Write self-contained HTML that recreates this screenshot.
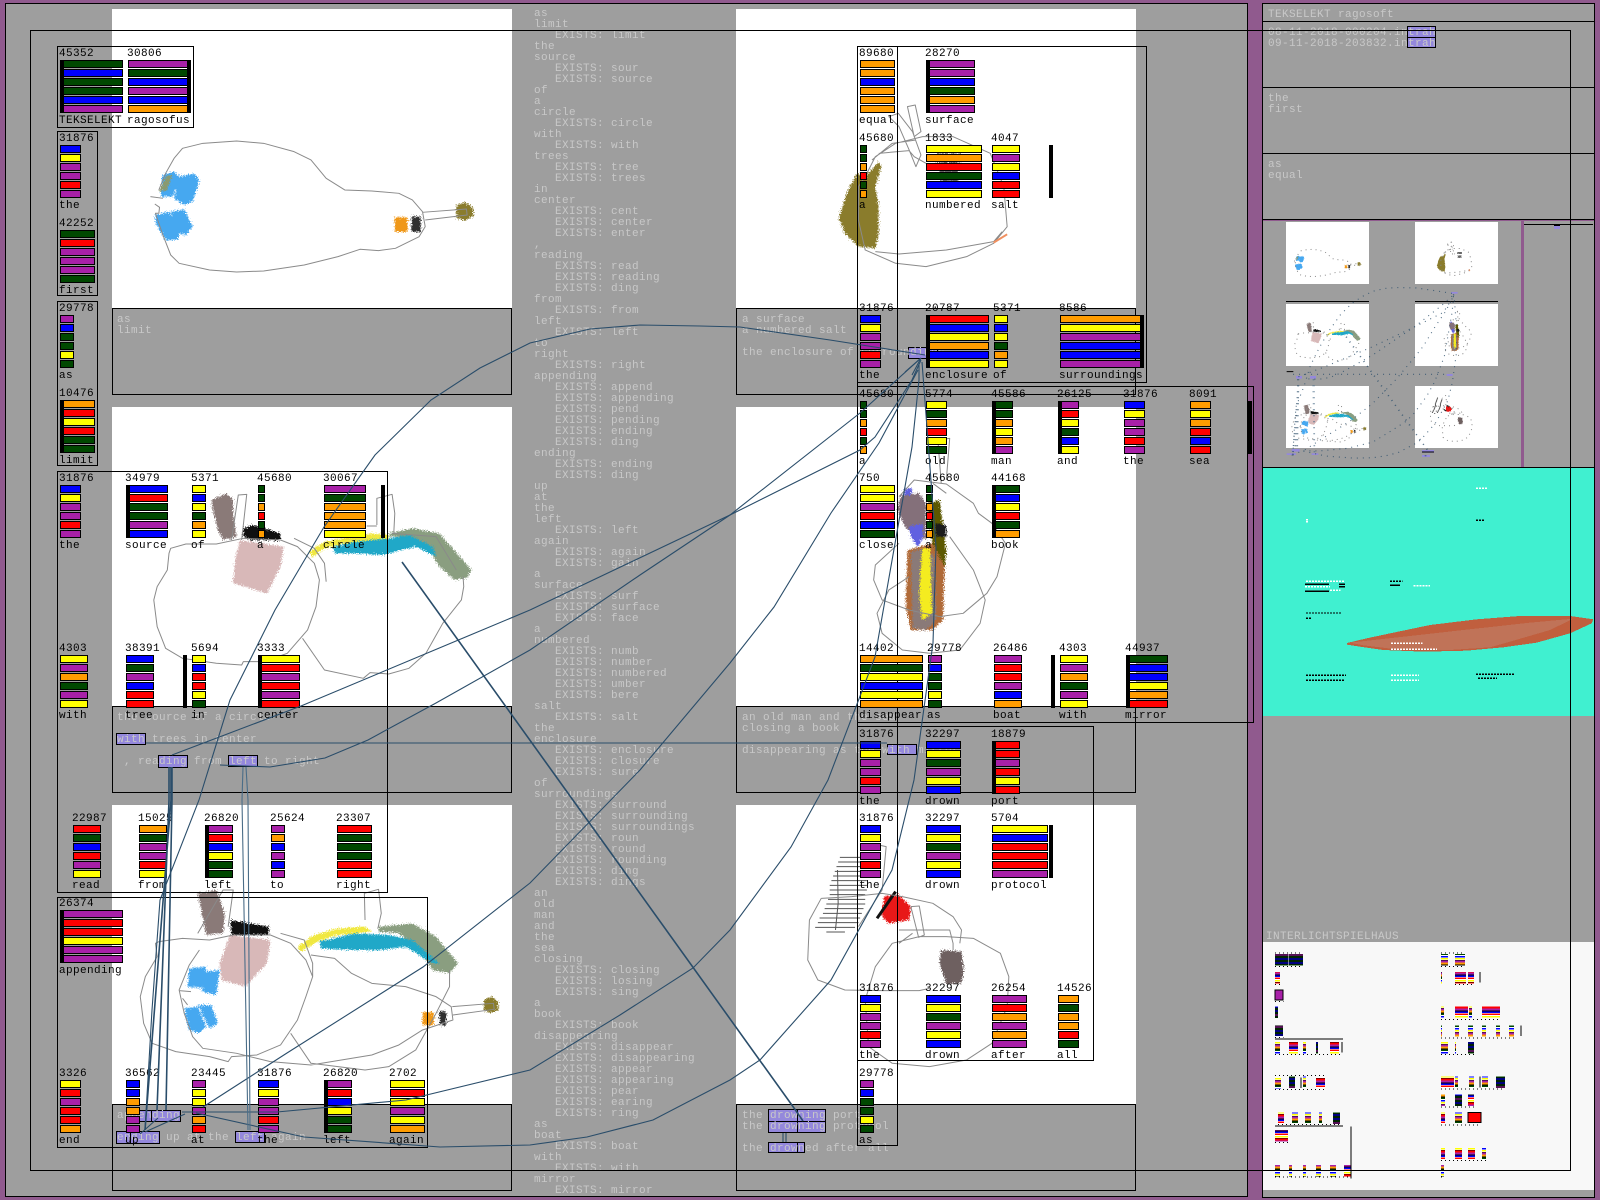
<!DOCTYPE html>
<html><head><meta charset="utf-8"><title>TEKSELEKT</title>
<style>
html,body{margin:0;padding:0;width:1600px;height:1200px;overflow:hidden;background:#905a8e}
body{position:relative;font:11px/11px "Liberation Mono",monospace;letter-spacing:.4px}
div,pre,svg{position:absolute;margin:0}
pre{color:#c8c8c8;font:inherit;white-space:pre;transform:translateY(2px)}
.f{border:1px solid #000;box-sizing:border-box}
.g0{background:#9e9e9e}
.t{background:#9e9e9e;border:1px solid #000;box-sizing:border-box;width:400px;height:87px}
.h{background:#9488dc;border:1px solid #000;box-sizing:border-box}
.w{color:#000}
.w b{position:absolute;left:-1px;top:-11px;font-weight:400;white-space:pre}
.w s{position:absolute;left:-1px;top:56px;text-decoration:none;white-space:pre}
.w i{display:block;box-sizing:border-box;height:8px;margin-bottom:1px;border:1px solid #000}
.bl i{margin-left:3px}.br i{margin-right:3px}
.bl::before,.br::before{content:"";position:absolute;top:0;width:4px;height:53px;background:#000}
.bl::before{left:0}.br::before{right:0}
.k{width:4px;height:53px;background:#000}
.g{background:#004800}.b{background:#00f}.y{background:#ff0}.p{background:#a820a8}.r{background:#f00}.o{background:#ff9c00}
.s{fill:none;stroke:#8a8a8a;stroke-width:1;vector-effect:non-scaling-stroke;stroke-linejoin:round}
.c{fill:none;stroke:#2a4d6a;stroke-width:1.1;vector-effect:non-scaling-stroke}
.d{fill:none;stroke:#2a4d6a;stroke-width:1.6;vector-effect:non-scaling-stroke}
</style></head><body>

<div class="f g0" style="left:5px;top:3px;width:1243px;height:1194px"></div>
<div class="f g0" style="left:1262px;top:3px;width:333px;height:1195px"></div>
<div class="f" style="left:1262px;top:21px;width:333px;height:67px"></div>
<div class="f" style="left:1262px;top:87px;width:333px;height:67px"></div>
<div class="f" style="left:1262px;top:153px;width:333px;height:67px"></div>
<div style="left:1263px;top:220px;width:331px;height:1px;background:#905a8e"></div>
<div style="left:1521px;top:220px;width:3px;height:247px;background:#905a8e"></div>
<div style="left:1524px;top:224px;width:69px;height:1px;background:#000"></div>
<div style="left:1554px;top:225px;width:6px;height:4px;background:#9488dc;border-top:1px solid #000;box-sizing:border-box"></div>

<svg style="left:0;top:0" width="1600" height="1200" viewBox="0 0 1600 1200">
<defs>
<filter id="fz" x="-15%" y="-15%" width="130%" height="130%" color-interpolation-filters="sRGB"><feTurbulence type="fractalNoise" baseFrequency=".3" numOctaves="2" seed="4"/><feDisplacementMap in="SourceGraphic" scale="22" xChannelSelector="R" yChannelSelector="G"/></filter>
</defs>
<g fill="#fff">
<rect x="112" y="9" width="400" height="300"/><rect x="736" y="9" width="400" height="300"/>
<rect x="112" y="407" width="400" height="300"/><rect x="736" y="407" width="400" height="300"/>
<rect x="112" y="805" width="400" height="300"/><rect x="736" y="805" width="400" height="300"/>
<rect x="1286" y="222" width="83" height="62"/><rect x="1415" y="222" width="83" height="62"/>
<rect x="1286" y="304" width="83" height="62"/><rect x="1415" y="304" width="83" height="62"/>
<rect x="1286" y="386" width="83" height="62"/><rect x="1415" y="386" width="83" height="62"/>
</g>
<rect x="1286" y="301" width="83" height="1" fill="#000"/><rect x="1415" y="301" width="83" height="1" fill="#000"/>

<g id="i1" transform="scale(.338 .3333)">
<g filter="url(#fz)">
<path fill="#46a8f0" d="M480 525L515 515 535 535 510 590 475 590ZM530 530L575 520 590 540 570 605 545 615 515 595ZM460 645L500 635 535 690 525 720 490 720 460 670ZM505 635L545 628 570 680 550 705 525 700Z"/>
<path fill="#8a9a70" d="M470 575L490 530 510 525 495 570Z"/>
<path fill="#f09818" d="M1168 652H1206V696H1168Z"/><path fill="#303030" d="M1218 650H1245V696H1218Z"/>
<path fill="#8a7c2c" d="M1350 618L1375 606 1398 622 1402 648 1375 662 1350 654Z"/>
</g>
<path class="s" d="M458 612L472 622 470 640 460 640 480 700 505 765 530 790 620 810 700 816 780 813 900 795 1000 770 1065 748 1120 752 1170 745 1240 710 1258 680 1250 635 1220 600 1180 580 1100 573 1020 570 965 535 920 480 870 455 780 430 700 423 600 430 540 445 515 475 490 520 470 570M445 590L482 595M1250 637L1380 627 1382 645 1258 660"/>
</g>

<g id="i2" transform="translate(730 0) scale(.338 .3333)">
<g filter="url(#fz)"><path fill="#8a7c2c" d="M400 530L440 485 448 500 430 560 440 620 440 700 430 745 380 740 340 700 322 655 345 580 375 520Z"/>
<path fill="#666" d="M612 460H680V490H612ZM620 510H675V545H620Z"/></g>
<path class="s" d="M400 530L430 470 490 430 570 410 660 410 770 460 810 560 820 680 780 730 700 770 580 800 490 790 400 750 380 660 380 560ZM440 460L530 452 545 470 580 490M420 480L480 430 550 420M430 755L500 762 640 750 780 725 805 695M470 350L498 340 540 395 565 465 550 500 530 450 500 380ZM525 320L548 315 565 395 545 410Z"/>
<path d="M780 728L820 703" fill="none" stroke="#f09060" stroke-width="2" vector-effect="non-scaling-stroke"/>
</g>

<g id="i3" transform="translate(0 400) scale(.338 .3333)">
<g filter="url(#fz)">
<path fill="#8a7a78" d="M625 300L670 280 690 300 690 340 700 410 660 420 645 390 630 330Z"/>
<path fill="#d8b8b8" d="M710 420L840 440 830 500 790 580 690 550 695 480Z"/>
<path fill="#101010" d="M720 385L750 375 830 400 830 420 740 420 720 410Z"/>
<path fill="#8a9e80" d="M1150 400L1220 385 1300 400 1395 510 1380 535 1345 540 1300 500 1270 450 1210 410 1155 410Z"/>
<path fill="#f0e840" d="M915 455L960 425 1010 415 1100 400 1150 405 1150 420 1010 432 960 445 925 472Z"/>
<path fill="#20a8c8" d="M985 440L1050 425 1150 415 1210 405 1280 440 1290 470 1230 440 1130 465 1050 460 990 460Z"/>
</g>
<path class="s" d="M505 445L550 432 640 432 720 415 830 420 880 440 930 490 945 540 935 620 910 690 850 760 780 785 720 785 715 795 640 790 540 775 490 745 465 680 455 600 465 560 495 510 500 460ZM895 715L960 810 1075 835 1095 818 1150 822 1210 805 1260 760 1310 670 1365 600 1372 560 1370 530M870 415L930 445 960 490 965 545M685 420L705 285 730 283 715 420M1115 375L1115 295 1160 283 1168 340 1165 400M1085 378H1115M1160 400L1290 410 1350 510"/>
</g>

<g id="i4" transform="translate(730 380) scale(.338 .3333)">
<g filter="url(#fz)">
<path fill="#84707a" d="M505 345L560 340 580 370 580 480 520 445 495 390Z"/>
<path fill="#5c5800" d="M585 370L620 360 640 510 635 570 600 500Z"/>
<path fill="#6060e0" d="M515 325H540L535 345H515ZM530 440L570 430 572 470 555 500 535 470Z"/>
<path fill="#1c1c1c" d="M605 430L640 435 640 470 610 470Z"/>
<path fill="#b06a38" d="M525 510L600 490 635 560 630 720 600 750 535 750 520 680Z"/>
<path fill="#8a7a78" d="M535 515L570 505 605 530 610 720 580 750 540 745Z"/>
<path fill="#f4ec20" d="M568 505L592 505 598 700 568 722 560 640Z"/>
</g>
<path class="s" d="M500 350L545 300 640 312 720 370 735 400 775 430 815 490 790 590 760 640 690 700 620 710 530 690 450 660 425 600 430 555 500 490M650 470L720 570 755 660 740 730 680 810 590 820 510 810 450 760 435 700 470 630 530 590M610 180L650 175 640 300M615 180L625 310M600 310L640 340"/>
</g>

<g id="i5" transform="translate(0 800) scale(.338 .3333)">
<g filter="url(#fz)">
<path fill="#8a7a78" d="M585 280L640 270 665 340 660 400 610 405Z"/>
<path fill="#d8b8b8" d="M680 405L800 420 790 490 725 560 655 540 650 490Z"/>
<path fill="#101010" d="M682 360L795 380 795 405 685 405Z"/>
<path fill="#46a8f0" d="M560 505L610 500 600 565 555 560ZM605 515L650 510 640 585 600 575ZM545 625L585 620 610 680 590 700 560 690ZM585 615L625 615 645 670 620 685Z"/>
<path fill="#8a9e80" d="M1120 380L1220 370 1290 410 1355 490 1330 520 1280 510 1240 450 1180 400 1120 395Z"/>
<path fill="#f0e840" d="M880 440L930 405 1000 385 1080 380 1100 395 1000 405 940 425 890 455Z"/>
<path fill="#20a8c8" d="M945 425L1050 400 1150 405 1220 420 1300 490 1280 490 1200 440 1130 450 1040 450 950 445Z"/>
<path fill="#f09818" d="M1250 637H1284V676H1250Z"/><path fill="#303030" d="M1300 634H1320V676H1300Z"/>
<path fill="#8a7c2c" d="M1432 600L1455 590 1474 605 1474 630 1450 640 1432 630Z"/>
</g>
<path class="s" d="M470 425L540 415 620 420 690 405 800 405 860 430 905 480 925 530 905 590 880 660 830 735 760 765 685 770 675 785 620 770 520 755 450 730 425 670 415 590 430 530 465 470 460 430ZM590 450L560 495 530 570 545 640 570 710 600 745 700 760 800 785 920 795 1100 765 1180 735 1250 690 1340 660 1335 620 1290 590 1200 560 1100 550 1040 520 990 475 920 465M860 700L920 790 1080 810 1150 800 1230 750 1290 640 1330 560 1330 510M585 400L660 270 690 270 675 380M1080 360L1078 280 1120 268 1128 340 1118 385M1338 620L1460 610 1462 628 1340 645M830 400L900 420 925 490 925 530M530 572L565 575M540 595L555 615"/>
</g>

<g id="i6" transform="translate(730 780) scale(.338 .3333)">
<path class="s" stroke-width="1" style="stroke:#555" d="M325 232H400M320 246H400M315 260H405M310 274H405M305 288H405M300 302H405M295 316H405M295 330H405M295 344H400M290 358H400M285 372H400M280 386H395M275 400H390M265 414H385M260 428H380M252 442H370M285 456H340M318 270L320 370 312 450"/>
<g filter="url(#fz)"><path fill="#e81818" d="M455 350L500 345 535 380 530 420 470 430 450 410Z"/>
<path fill="#6e6060" d="M625 510L685 515 692 570 685 610 640 612 620 550Z"/></g>
<path d="M435 415L490 335" fill="none" stroke="#111" stroke-width="3" vector-effect="non-scaling-stroke"/>
<path class="s" d="M270 355L360 350 450 340 510 350 600 370 660 410 685 450 680 490M270 355L235 420 230 540 260 600 340 630 450 632 560 632 590 625M480 490L560 470 640 470 720 475 800 520 825 590 820 680 775 790 700 840 590 860 480 850 410 800 400 660 430 560 480 490M535 380L560 378 575 465 558 472ZM500 450H650L660 490V510M540 460L500 490M440 195L462 200 450 330 380 440"/>
</g>

<g stroke-dasharray="1 4">
<use href="#i1" transform="translate(1286 222) scale(.2075) translate(-112 -9)"/>
<use href="#i2" transform="translate(1286 222) scale(.2075) translate(-112 -9)"/>
<use href="#i3" transform="translate(1286 222) scale(.2075) translate(-112 -9)"/>
<use href="#i4" transform="translate(1286 222) scale(.2075) translate(-112 -9)"/>
<use href="#i5" transform="translate(1286 222) scale(.2075) translate(-112 -9)"/>
<use href="#i6" transform="translate(1286 222) scale(.2075) translate(-112 -9)"/>
</g>
</svg>

<pre style="left:534px;top:7px;height:1186px;overflow:hidden;width:190px">as
limit
   EXISTS: limit
the
source
   EXISTS: sour
   EXISTS: source
of
a
circle
   EXISTS: circle
with
   EXISTS: with
trees
   EXISTS: tree
   EXISTS: trees
in
center
   EXISTS: cent
   EXISTS: center
   EXISTS: enter
,
reading
   EXISTS: read
   EXISTS: reading
   EXISTS: ding
from
   EXISTS: from
left
   EXISTS: left
to
right
   EXISTS: right
appending
   EXISTS: append
   EXISTS: appending
   EXISTS: pend
   EXISTS: pending
   EXISTS: ending
   EXISTS: ding
ending
   EXISTS: ending
   EXISTS: ding
up
at
the
left
   EXISTS: left
again
   EXISTS: again
   EXISTS: gain
a
surface
   EXISTS: surf
   EXISTS: surface
   EXISTS: face
a
numbered
   EXISTS: numb
   EXISTS: number
   EXISTS: numbered
   EXISTS: umber
   EXISTS: bere
salt
   EXISTS: salt
the
enclosure
   EXISTS: enclosure
   EXISTS: closure
   EXISTS: sure
of
surroundings
   EXISTS: surround
   EXISTS: surrounding
   EXISTS: surroundings
   EXISTS: roun
   EXISTS: round
   EXISTS: rounding
   EXISTS: ding
   EXISTS: dings
an
old
man
and
the
sea
closing
   EXISTS: closing
   EXISTS: losing
   EXISTS: sing
a
book
   EXISTS: book
disappearing
   EXISTS: disappear
   EXISTS: disappearing
   EXISTS: appear
   EXISTS: appearing
   EXISTS: pear
   EXISTS: earing
   EXISTS: ring
as
boat
   EXISTS: boat
with
   EXISTS: with
mirror
   EXISTS: mirror
the</pre>

<div class="t" style="left:112px;top:308px"></div><div class="t" style="left:736px;top:308px"></div>
<div class="t" style="left:112px;top:706px"></div><div class="t" style="left:736px;top:706px"></div>
<div class="t" style="left:112px;top:1104px"></div><div class="t" style="left:736px;top:1104px"></div>

<div class="h" style="left:116px;top:733px;width:30px;height:12px"></div>
<div class="h" style="left:158px;top:755px;width:30px;height:13px"></div>
<div class="h" style="left:228px;top:755px;width:30px;height:12px"></div>
<div class="h" style="left:908px;top:347px;width:30px;height:12px"></div>
<div class="h" style="left:887px;top:744px;width:30px;height:11px"></div>
<div class="h" style="left:139px;top:1110px;width:19px;height:12px"></div>
<div class="h" style="left:151px;top:1110px;width:30px;height:12px"></div>
<div class="h" style="left:116px;top:1131px;width:44px;height:13px"></div>
<div class="h" style="left:116px;top:1131px;width:15px;height:13px"></div>
<div class="h" style="left:235px;top:1131px;width:30px;height:12px"></div>
<div class="h" style="left:768px;top:1109px;width:58px;height:13px"></div>
<div class="h" style="left:768px;top:1109px;width:30px;height:13px"></div>
<div class="h" style="left:768px;top:1121px;width:58px;height:12px"></div>
<div class="h" style="left:768px;top:1121px;width:30px;height:12px"></div>
<div class="h" style="left:768px;top:1142px;width:37px;height:11px"></div>
<div class="h" style="left:768px;top:1142px;width:30px;height:11px"></div>
<div class="h" style="left:1407px;top:26px;width:29px;height:12px"></div>
<div class="h" style="left:1407px;top:37px;width:29px;height:11px"></div>

<pre style="left:117px;top:313px">as
limit</pre>
<pre style="left:742px;top:313px">a surface
a numbered salt

the enclosure of surroundings</pre>
<pre style="left:117px;top:711px">the source of a circle

with trees in center

 , reading from left to right</pre>
<pre style="left:742px;top:711px">an old man and the sea
closing a book

disappearing as the with mirror</pre>
<pre style="left:117px;top:1109px">appending

ending up at the left again</pre>
<pre style="left:742px;top:1109px">the drowning port
the drowning protocol

the drowned after all</pre>
<pre style="left:1268px;top:8px;letter-spacing:.4px">TEKSELEKT ragosoft</pre>
<pre style="left:1268px;top:26px">08-11-2018-000204.intrah
09-11-2018-203832.intrah</pre>
<pre style="left:1268px;top:92px">the
first</pre>
<pre style="left:1268px;top:158px">as
equal</pre>
<pre style="left:1266px;top:930px">INTERLICHTSPIELHAUS</pre>

<div style="left:1263px;top:467px;width:331px;height:249px;background:#40f0d0;border-top:1px solid #000;box-sizing:border-box"></div>
<div style="left:1263px;top:942px;width:331px;height:248px;background:#f8f8f8"></div>

<svg style="left:1250px;top:460px" width="350" height="270" viewBox="0 0 1050 810" shape-rendering="crispEdges">
<path fill="#c05f3e" d="M291 549L350 535 430 518 540 495 680 478 810 468 960 468 1030 478 1025 490 960 520 860 548 760 562 650 572 520 575 400 570 330 560 291 554Z"/>
<path fill="#c07358" d="M300 548L480 528 640 510 840 488 970 476 900 510 780 545 720 562 600 570 440 568 340 556Z"/>
<g fill="none" stroke-width="4" stroke-dasharray="6 3">
<path stroke="#fff" d="M678 85H712M168 179H174M168 185H174M168 364H282M165 380H240M490 377H540M423 550H517M423 568H561M423 646H507M423 661H507M240 391H272"/>
<path stroke="#000" stroke-dasharray="none" d="M165 373H237M165 394H237M267 373H285M267 380H285M420 376H450"/>
<path stroke="#000" d="M678 181H702M420 364H458M168 459H273M168 475H186M168 646H288M168 661H282M678 643H795M684 655H741"/>
</g>
</svg>

<svg style="left:1250px;top:920px" width="350" height="280" viewBox="0 0 1050 840" shape-rendering="crispEdges">
<defs>
<pattern id="p1" width="6" height="36" patternUnits="userSpaceOnUse"><rect width="6" height="36" fill="#000"/><rect y="1" width="6" height="4" fill="#004800"/><rect y="7" width="6" height="4" fill="#00f"/><rect y="13" width="6" height="4" fill="#004800"/><rect y="19" width="6" height="4" fill="#00f"/><rect y="25" width="6" height="4" fill="#004800"/><rect y="31" width="6" height="4" fill="#a820a8"/></pattern>
<pattern id="p2" width="6" height="36" patternUnits="userSpaceOnUse"><rect width="6" height="36" fill="#fff"/><rect y="0" width="6" height="5" fill="#ff0"/><rect y="6" width="6" height="2" fill="#000"/><rect y="8" width="6" height="5" fill="#f00"/><rect y="14" width="6" height="5" fill="#a820a8"/><rect y="20" width="6" height="2" fill="#000"/><rect y="22" width="6" height="5" fill="#00f"/><rect y="28" width="6" height="5" fill="#f00"/></pattern>
<pattern id="p3" width="6" height="36" patternUnits="userSpaceOnUse"><rect width="6" height="36" fill="#fff"/><rect y="0" width="6" height="5" fill="#00f"/><rect y="6" width="6" height="5" fill="#ff0"/><rect y="12" width="6" height="2" fill="#000"/><rect y="14" width="6" height="5" fill="#a820a8"/><rect y="20" width="6" height="5" fill="#ff9c00"/><rect y="26" width="6" height="2" fill="#000"/><rect y="28" width="6" height="5" fill="#004800"/></pattern>
</defs>
<g fill="url(#p1)">
<rect x="75" y="102" width="40" height="34"/><rect x="117" y="102" width="42" height="34"/><rect x="75" y="260" width="9" height="34"/><rect x="198" y="366" width="6" height="34"/><rect x="654" y="366" width="18" height="34"/><rect x="75" y="316" width="24" height="32"/><rect x="117" y="470" width="18" height="34"/><rect x="249" y="578" width="21" height="34"/><rect x="615" y="524" width="21" height="34"/><rect x="738" y="470" width="27" height="34"/>
</g>
<g fill="url(#p2)">
<rect x="75" y="156" width="15" height="34"/><rect x="615" y="156" width="33" height="34"/><rect x="654" y="156" width="18" height="34"/><rect x="615" y="260" width="39" height="34"/><rect x="696" y="260" width="54" height="34"/><rect x="117" y="366" width="27" height="34"/><rect x="240" y="366" width="27" height="34"/><rect x="198" y="472" width="27" height="32"/><rect x="84" y="578" width="18" height="34"/><rect x="75" y="630" width="39" height="34"/><rect x="282" y="735" width="21" height="34"/><rect x="654" y="684" width="21" height="34"/><rect x="573" y="470" width="39" height="34"/><rect x="615" y="684" width="21" height="34"/><rect x="573" y="578" width="12" height="34"/><rect x="654" y="524" width="18" height="34"/><rect x="573" y="684" width="12" height="34"/>
</g>
<g fill="url(#p3)">
<rect x="573" y="102" width="21" height="34"/><rect x="615" y="102" width="30" height="34"/><rect x="573" y="156" width="3" height="34"/><rect x="573" y="260" width="9" height="34"/><rect x="657" y="260" width="9" height="34"/><rect x="573" y="316" width="3" height="34"/><rect x="615" y="316" width="12" height="34"/><rect x="654" y="316" width="15" height="34"/><rect x="696" y="316" width="12" height="34"/><rect x="738" y="316" width="12" height="34"/><rect x="777" y="316" width="15" height="34"/><rect x="573" y="366" width="21" height="34"/><rect x="615" y="366" width="3" height="34"/><rect x="75" y="366" width="15" height="34"/><rect x="159" y="366" width="9" height="34"/><rect x="75" y="472" width="18" height="34"/><rect x="159" y="470" width="9" height="34"/><rect x="126" y="578" width="18" height="34"/><rect x="165" y="578" width="18" height="34"/><rect x="207" y="578" width="9" height="34"/><rect x="75" y="735" width="15" height="34"/><rect x="117" y="735" width="9" height="34"/><rect x="159" y="735" width="9" height="34"/><rect x="198" y="735" width="15" height="34"/><rect x="240" y="735" width="18" height="34"/><rect x="615" y="470" width="9" height="34"/><rect x="657" y="470" width="15" height="34"/><rect x="696" y="470" width="18" height="34"/><rect x="573" y="524" width="12" height="34"/><rect x="615" y="578" width="21" height="34"/><rect x="696" y="684" width="12" height="34"/><rect x="573" y="735" width="9" height="34"/>
</g>
<rect x="75" y="210" width="24" height="30" fill="#a820a8" stroke="#000" stroke-width="3"/>
<rect x="654" y="578" width="39" height="30" fill="#f00" stroke="#000" stroke-width="3"/>
<path stroke="#000" stroke-width="3" fill="none" d="M75 357H279M276 366V398M153 472V504M690 156V188M813 316V348M690 470V502M75 618H279M303 620V775"/>
<path stroke="#000" stroke-width="3" stroke-dasharray="3 9" fill="none" d="M75 99H159M75 139H159M75 193H90M75 244H100M75 352H100M75 403H270M75 508H225M75 466H225M84 614H270M75 668H114M75 771H300M573 99H645M573 139H645M615 193H672M573 298H750M573 354H792M573 403H672M573 507H765M573 561H672M573 615H692M573 722H708M573 771H582"/>
</svg>

<div class="f" style="left:57px;top:46px;width:137px;height:82px"></div>
<div class="f" style="left:57px;top:131px;width:41px;height:165px"></div>
<div class="f" style="left:57px;top:301px;width:41px;height:165px"></div>
<div class="f" style="left:57px;top:471px;width:331px;height:422px"></div>
<div class="f" style="left:57px;top:897px;width:371px;height:251px"></div>
<div class="f" style="left:857px;top:46px;width:290px;height:337px"></div>
<div class="f" style="left:857px;top:386px;width:397px;height:337px"></div>
<div class="f" style="left:857px;top:726px;width:237px;height:335px"></div>
<div class="f" style="left:857px;top:46px;width:41px;height:1100px"></div>
<div class="f" style="left:30px;top:30px;width:1541px;height:1141px"></div>

<div class="w bl" style="left:60px;top:60px;width:63px"><b>45352</b><i class="g"></i><i class="b"></i><i class="g"></i><i class="g"></i><i class="b"></i><i class="p"></i><s>TEKSELEKT</s></div>
<div class="w br" style="left:128px;top:60px;width:63px"><b>30806</b><i class="p"></i><i class="g"></i><i class="b"></i><i class="p"></i><i class="b"></i><i class="o"></i><s>ragosofus</s></div>
<div class="w" style="left:60px;top:145px;width:21px"><b>31876</b><i class="b"></i><i class="y"></i><i class="p"></i><i class="p"></i><i class="r"></i><i class="p"></i><s>the</s></div>
<div class="w" style="left:60px;top:230px;width:35px"><b>42252</b><i class="g"></i><i class="r"></i><i class="p"></i><i class="p"></i><i class="p"></i><i class="g"></i><s>first</s></div>
<div class="w" style="left:60px;top:315px;width:14px"><b>29778</b><i class="p"></i><i class="b"></i><i class="g"></i><i class="g"></i><i class="y"></i><i class="g"></i><s>as</s></div>
<div class="w bl" style="left:60px;top:400px;width:35px"><b>10476</b><i class="o"></i><i class="r"></i><i class="y"></i><i class="r"></i><i class="g"></i><i class="g"></i><s>limit</s></div>

<div class="w" style="left:60px;top:485px;width:21px"><b>31876</b><i class="b"></i><i class="y"></i><i class="p"></i><i class="p"></i><i class="r"></i><i class="p"></i><s>the</s></div>
<div class="w bl" style="left:126px;top:485px;width:42px"><b>34979</b><i class="b"></i><i class="r"></i><i class="g"></i><i class="g"></i><i class="p"></i><i class="b"></i><s>source</s></div>
<div class="w" style="left:192px;top:485px;width:14px"><b>5371</b><i class="y"></i><i class="b"></i><i class="y"></i><i class="g"></i><i class="o"></i><i class="y"></i><s>of</s></div>
<div class="w" style="left:258px;top:485px;width:7px"><b>45680</b><i class="g"></i><i class="g"></i><i class="o"></i><i class="r"></i><i class="g"></i><i class="o"></i><s>a</s></div>
<div class="w" style="left:324px;top:485px;width:42px"><b>30067</b><i class="p"></i><i class="g"></i><i class="o"></i><i class="o"></i><i class="o"></i><i class="y"></i><s>circle</s></div>
<div class="k" style="left:381px;top:485px"></div>
<div class="w" style="left:60px;top:655px;width:28px"><b>4303</b><i class="y"></i><i class="p"></i><i class="o"></i><i class="g"></i><i class="p"></i><i class="y"></i><s>with</s></div>
<div class="w" style="left:126px;top:655px;width:28px"><b>38391</b><i class="b"></i><i class="g"></i><i class="p"></i><i class="b"></i><i class="r"></i><i class="r"></i><s>tree</s></div>
<div class="k" style="left:183px;top:655px"></div>
<div class="w" style="left:192px;top:655px;width:14px"><b>5694</b><i class="y"></i><i class="b"></i><i class="r"></i><i class="r"></i><i class="y"></i><i class="g"></i><s>in</s></div>
<div class="w bl" style="left:258px;top:655px;width:42px"><b>3333</b><i class="y"></i><i class="r"></i><i class="p"></i><i class="r"></i><i class="p"></i><i class="r"></i><s>center</s></div>
<div class="w" style="left:73px;top:825px;width:28px"><b>22987</b><i class="r"></i><i class="g"></i><i class="b"></i><i class="r"></i><i class="p"></i><i class="y"></i><s>read</s></div>
<div class="w" style="left:139px;top:825px;width:28px"><b>15025</b><i class="o"></i><i class="g"></i><i class="p"></i><i class="p"></i><i class="r"></i><i class="y"></i><s>from</s></div>
<div class="w bl" style="left:205px;top:825px;width:28px"><b>26820</b><i class="p"></i><i class="r"></i><i class="b"></i><i class="y"></i><i class="g"></i><i class="g"></i><s>left</s></div>
<div class="w" style="left:271px;top:825px;width:14px"><b>25624</b><i class="p"></i><i class="o"></i><i class="b"></i><i class="p"></i><i class="b"></i><i class="p"></i><s>to</s></div>
<div class="w" style="left:337px;top:825px;width:35px"><b>23307</b><i class="r"></i><i class="g"></i><i class="g"></i><i class="g"></i><i class="r"></i><i class="r"></i><s>right</s></div>

<div class="w bl" style="left:60px;top:910px;width:63px"><b>26374</b><i class="p"></i><i class="r"></i><i class="r"></i><i class="y"></i><i class="p"></i><i class="p"></i><s>appending</s></div>
<div class="w" style="left:60px;top:1080px;width:21px"><b>3326</b><i class="y"></i><i class="r"></i><i class="p"></i><i class="r"></i><i class="r"></i><i class="o"></i><s>end</s></div>
<div class="w" style="left:126px;top:1080px;width:14px"><b>36562</b><i class="b"></i><i class="b"></i><i class="o"></i><i class="o"></i><i class="p"></i><i class="p"></i><s>up</s></div>
<div class="w" style="left:192px;top:1080px;width:14px"><b>23445</b><i class="p"></i><i class="y"></i><i class="y"></i><i class="p"></i><i class="o"></i><i class="r"></i><s>at</s></div>
<div class="w" style="left:258px;top:1080px;width:21px"><b>31876</b><i class="b"></i><i class="y"></i><i class="p"></i><i class="p"></i><i class="r"></i><i class="p"></i><s>the</s></div>
<div class="w bl" style="left:324px;top:1080px;width:28px"><b>26820</b><i class="p"></i><i class="r"></i><i class="b"></i><i class="y"></i><i class="g"></i><i class="g"></i><s>left</s></div>
<div class="w" style="left:390px;top:1080px;width:35px"><b>2702</b><i class="y"></i><i class="r"></i><i class="y"></i><i class="p"></i><i class="y"></i><i class="o"></i><s>again</s></div>

<div class="w" style="left:860px;top:60px;width:35px"><b>89680</b><i class="o"></i><i class="o"></i><i class="b"></i><i class="o"></i><i class="o"></i><i class="o"></i><s>equal</s></div>
<div class="w bl" style="left:926px;top:60px;width:49px"><b>28270</b><i class="p"></i><i class="p"></i><i class="b"></i><i class="g"></i><i class="o"></i><i class="p"></i><s>surface</s></div>
<div class="w" style="left:860px;top:145px;width:7px"><b>45680</b><i class="g"></i><i class="g"></i><i class="o"></i><i class="r"></i><i class="g"></i><i class="o"></i><s>a</s></div>
<div class="w" style="left:926px;top:145px;width:56px"><b>1833</b><i class="y"></i><i class="o"></i><i class="r"></i><i class="g"></i><i class="b"></i><i class="y"></i><s>numbered</s></div>
<div class="w" style="left:992px;top:145px;width:28px"><b>4047</b><i class="y"></i><i class="p"></i><i class="y"></i><i class="b"></i><i class="r"></i><i class="r"></i><s>salt</s></div>
<div class="k" style="left:1049px;top:145px"></div>
<div class="w" style="left:860px;top:315px;width:21px"><b>31876</b><i class="b"></i><i class="y"></i><i class="p"></i><i class="p"></i><i class="r"></i><i class="p"></i><s>the</s></div>
<div class="w bl" style="left:926px;top:315px;width:63px"><b>20787</b><i class="r"></i><i class="b"></i><i class="y"></i><i class="o"></i><i class="b"></i><i class="y"></i><s>enclosure</s></div>
<div class="w" style="left:994px;top:315px;width:14px"><b>5371</b><i class="y"></i><i class="b"></i><i class="y"></i><i class="g"></i><i class="o"></i><i class="y"></i><s>of</s></div>
<div class="w br" style="left:1060px;top:315px;width:84px"><b>8586</b><i class="o"></i><i class="y"></i><i class="p"></i><i class="b"></i><i class="b"></i><i class="p"></i><s>surroundings</s></div>

<div class="w" style="left:860px;top:401px;width:7px"><b>45680</b><i class="g"></i><i class="g"></i><i class="o"></i><i class="r"></i><i class="g"></i><i class="o"></i><s>a</s></div>
<div class="w" style="left:926px;top:401px;width:21px"><b>5774</b><i class="y"></i><i class="g"></i><i class="o"></i><i class="r"></i><i class="y"></i><i class="g"></i><s>old</s></div>
<div class="w bl" style="left:992px;top:401px;width:21px"><b>45586</b><i class="g"></i><i class="g"></i><i class="o"></i><i class="y"></i><i class="o"></i><i class="p"></i><s>man</s></div>
<div class="w bl" style="left:1058px;top:401px;width:21px"><b>26125</b><i class="p"></i><i class="r"></i><i class="y"></i><i class="g"></i><i class="b"></i><i class="y"></i><s>and</s></div>
<div class="w" style="left:1124px;top:401px;width:21px"><b>31876</b><i class="b"></i><i class="y"></i><i class="p"></i><i class="p"></i><i class="r"></i><i class="p"></i><s>the</s></div>
<div class="w" style="left:1190px;top:401px;width:21px"><b>8091</b><i class="o"></i><i class="y"></i><i class="o"></i><i class="r"></i><i class="b"></i><i class="r"></i><s>sea</s></div>
<div class="k" style="left:1248px;top:401px"></div>
<div class="w" style="left:860px;top:485px;width:35px"><b>750</b><i class="y"></i><i class="y"></i><i class="p"></i><i class="r"></i><i class="b"></i><i class="g"></i><s>close</s></div>
<div class="w" style="left:926px;top:485px;width:7px"><b>45680</b><i class="g"></i><i class="g"></i><i class="o"></i><i class="r"></i><i class="g"></i><i class="o"></i><s>a</s></div>
<div class="w bl" style="left:992px;top:485px;width:28px"><b>44168</b><i class="g"></i><i class="b"></i><i class="y"></i><i class="r"></i><i class="g"></i><i class="o"></i><s>book</s></div>
<div class="w" style="left:860px;top:655px;width:63px"><b>14402</b><i class="o"></i><i class="g"></i><i class="y"></i><i class="b"></i><i class="y"></i><i class="o"></i><s>disappear</s></div>
<div class="w" style="left:928px;top:655px;width:14px"><b>29778</b><i class="p"></i><i class="b"></i><i class="g"></i><i class="g"></i><i class="y"></i><i class="g"></i><s>as</s></div>
<div class="w" style="left:994px;top:655px;width:28px"><b>26486</b><i class="p"></i><i class="r"></i><i class="r"></i><i class="p"></i><i class="b"></i><i class="o"></i><s>boat</s></div>
<div class="k" style="left:1051px;top:655px"></div>
<div class="w" style="left:1060px;top:655px;width:28px"><b>4303</b><i class="y"></i><i class="p"></i><i class="o"></i><i class="g"></i><i class="p"></i><i class="y"></i><s>with</s></div>
<div class="w bl" style="left:1126px;top:655px;width:42px"><b>44937</b><i class="g"></i><i class="b"></i><i class="b"></i><i class="y"></i><i class="o"></i><i class="r"></i><s>mirror</s></div>

<div class="w" style="left:860px;top:741px;width:21px"><b>31876</b><i class="b"></i><i class="y"></i><i class="p"></i><i class="p"></i><i class="r"></i><i class="p"></i><s>the</s></div>
<div class="w" style="left:926px;top:741px;width:35px"><b>32297</b><i class="b"></i><i class="y"></i><i class="g"></i><i class="p"></i><i class="y"></i><i class="b"></i><s>drown</s></div>
<div class="w bl" style="left:992px;top:741px;width:28px"><b>18879</b><i class="r"></i><i class="r"></i><i class="p"></i><i class="r"></i><i class="y"></i><i class="r"></i><s>port</s></div>
<div class="w" style="left:860px;top:825px;width:21px"><b>31876</b><i class="b"></i><i class="y"></i><i class="p"></i><i class="p"></i><i class="r"></i><i class="p"></i><s>the</s></div>
<div class="w" style="left:926px;top:825px;width:35px"><b>32297</b><i class="b"></i><i class="y"></i><i class="g"></i><i class="p"></i><i class="y"></i><i class="b"></i><s>drown</s></div>
<div class="w" style="left:992px;top:825px;width:56px"><b>5704</b><i class="y"></i><i class="b"></i><i class="r"></i><i class="r"></i><i class="r"></i><i class="p"></i><s>protocol</s></div>
<div class="k" style="left:1049px;top:825px"></div>
<div class="w" style="left:860px;top:995px;width:21px"><b>31876</b><i class="b"></i><i class="y"></i><i class="p"></i><i class="p"></i><i class="r"></i><i class="p"></i><s>the</s></div>
<div class="w" style="left:926px;top:995px;width:35px"><b>32297</b><i class="b"></i><i class="y"></i><i class="g"></i><i class="p"></i><i class="y"></i><i class="b"></i><s>drown</s></div>
<div class="w" style="left:992px;top:995px;width:35px"><b>26254</b><i class="p"></i><i class="r"></i><i class="o"></i><i class="p"></i><i class="o"></i><i class="p"></i><s>after</s></div>
<div class="w" style="left:1058px;top:995px;width:21px"><b>14526</b><i class="o"></i><i class="g"></i><i class="o"></i><i class="o"></i><i class="r"></i><i class="g"></i><s>all</s></div>
<div class="w" style="left:860px;top:1080px;width:14px"><b>29778</b><i class="p"></i><i class="b"></i><i class="g"></i><i class="g"></i><i class="y"></i><i class="g"></i><s>as</s></div>

<svg style="left:0;top:0" width="1600" height="1200" viewBox="0 0 1600 1200">
<g id="cv">
<path class="c" d="M145 1130L152 1010 160 900 199 800 230 700 275 610 324 527 375 455 431 400 480 368 530 343 590 329 640 325 700 326 740 327 830 340 925 355"/>
<path class="c" d="M172 755L301 706 530 610 730 515 860 450 875 437 899 400 912 380 921 360"/>
<path class="c" d="M220 765L270 767 325 758 368 740 436 703 530 650 640 575 730 515 860 413 921 358"/>
<path class="c" d="M919 365L919 380 912 447 875 657 828 780 791 847 730 930 693 968 620 1015 530 1070 406 1100 277 1112 182 1112"/>
<path class="c" d="M203 1107L287 1053 423 967 530 883 640 770 730 663 774 607 831 513 879 443 918 370"/>
<path class="c" d="M196 1113L304 1137 440 1147 530 1145 587 1137 653 1120 730 1080 760 1060 831 980 892 870 914 780 933 643 936 547 922 362"/>
<path class="d" d="M402 562L794 1108 803 1121"/>
<path class="c" d="M146 743H887"/>
<path class="d" d="M171 767L171 800 145 1130M169 767L169 800 157 1110M172 767L172 800 166 1110"/>
<path class="c" style="stroke:#4a6d88" d="M243 767L242 800 248 1130M246 767L248 800 250 1130"/>
<path class="c" d="M145 1132L185 1114M140 1134L158 1118M783 1133V1142M786 1133V1142M921 358L905 372M921 358L912 375"/>
</g>
<g transform="translate(1250 0) scale(.3333)">
<g fill="#9488dc"><rect x="138" y="1128" width="18" height="8"/><rect x="180" y="1128" width="18" height="8"/><rect x="590" y="1122" width="18" height="6"/><rect x="603" y="876" width="20" height="5"/><rect x="125" y="1347" width="24" height="8"/><rect x="110" y="1360" width="28" height="5"/><rect x="185" y="1360" width="20" height="5"/><rect x="516" y="1350" width="36" height="8"/><rect x="516" y="1365" width="24" height="6"/></g>
<path stroke="#000" stroke-width="3" d="M110 1115H130M516 1356H552"/>
</g>
<g stroke-dasharray="1 5" style="opacity:.8"><use href="#cv" transform="translate(1286 222) scale(.2075) translate(-112 -9)"/></g>
</svg>
</body></html>
